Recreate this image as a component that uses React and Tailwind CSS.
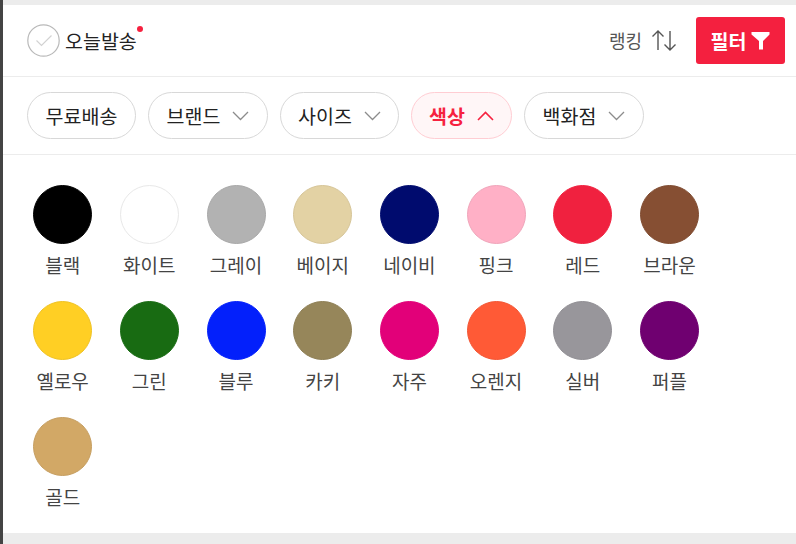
const colors = [
  ["블랙", "#000000", "#000000"],
  ["화이트", "#ffffff", "#e8e8e8"],
  ["그레이", "#b2b2b2", "#a8a8a8"],
  ["베이지", "#e3d2a4", "#d6c598"],
  ["네이비", "#000b6e", "#000b6e"],
  ["핑크", "#ffb0c6", "#efa5ba"],
  ["레드", "#f0213f", "#f0213f"],
  ["브라운", "#864f33", "#7f4b30"],
  ["옐로우", "#ffcf24", "#efc222"],
  ["그린", "#186b12", "#186b12"],
  ["블루", "#0320fb", "#0320fb"],
  ["카키", "#96865a", "#8e7f55"],
  ["자주", "#e20079", "#e20079"],
  ["오렌지", "#ff5a36", "#f25533"],
  ["실버", "#98969b", "#918f94"],
  ["퍼플", "#6f0070", "#6f0070"],
  ["골드", "#d2a866", "#c69e60"],
];

const font = { fontFamily: '"Noto Sans CJK KR", "Liberation Sans", sans-serif' };

function Chevron({ up, color }) {
  return (
    <svg width="17" height="10" viewBox="0 0 17 10" fill="none" stroke={color} strokeWidth={up ? 1.6 : 1.3}>
      <path d={up ? "M1 9 L8.5 1.5 L16 9" : "M1 1 L8.5 8.5 L16 1"} />
    </svg>
  );
}

function Chip({ label, chevron, width }) {
  return (
    <div className={`h-[47px] ${width} flex items-center justify-center gap-[12px] rounded-full border-[1.5px] border-[#d8d8d8] bg-white text-[19.5px] text-[#222222]`}>
      <span>{label}</span>
      {chevron && <Chevron color="#8c8c8c" />}
    </div>
  );
}

export default function App() {
  return (
    <div style={font} className="w-[796px] h-[544px] overflow-hidden bg-white border-l-[3px] border-[#444444] flex flex-col">
      <div className="h-[5px] bg-[#ececec]" />
      <div className="h-[72px] flex items-center justify-between border-b border-[#ececec] pl-[24px] pr-[11px]">
        <div className="flex items-center gap-[5px]">
          <svg width="33" height="33" viewBox="0 0 33 33" fill="none">
            <circle cx="16.5" cy="16.5" r="15.7" stroke="#b9b9b9" strokeWidth="1.2" />
            <path d="M9.5 16.5 L14.5 21.5 L24.5 11.5" stroke="#d2d2d2" strokeWidth="1.2" />
          </svg>
          <div className="relative text-[19.5px] text-[#222222]">
            오늘발송
            <span className="absolute right-[-6px] top-[0px] w-[6px] h-[6px] rounded-full bg-[#f6213f]" />
          </div>
        </div>
        <div className="flex items-center">
          <span className="text-[18px] text-[#555555]">랭킹</span>
          <svg className="ml-[9px]" width="26" height="24" viewBox="0 0 26 24" fill="none" stroke="#555555" strokeWidth="1.4">
            <path d="M7 21 V2 M1.5 7.5 L7 2 L12.5 7.5" />
            <path d="M19 2 V21 M13.5 15.5 L19 21 L24.5 15.5" />
          </svg>
          <div className="ml-[19px] w-[89px] h-[47px] rounded-[3px] bg-[#f4203f] flex items-center justify-center gap-[5px] text-white text-[19.5px] font-bold">
            <span>필터</span>
            <svg width="19" height="19" viewBox="0 0 19 19" fill="#ffffff">
              <path d="M0.5 1 H18.5 V3.5 L12 10 V18.5 H8 V10 L0.5 3.5 Z" />
            </svg>
          </div>
        </div>
      </div>
      <div className="h-[78px] flex items-center gap-[12px] border-b border-[#ececec] pl-[24px]">
        <Chip label="무료배송" width="w-[109px]" />
        <Chip label="브랜드" chevron width="w-[120px]" />
        <Chip label="사이즈" chevron width="w-[119px]" />
        <div className="h-[47px] w-[101px] flex items-center justify-center gap-[12px] rounded-full border-[1.5px] border-[#ffcdd3] bg-[#fff6f7] text-[19.5px] font-bold text-[#f6213f]">
          <span>색상</span>
          <Chevron up color="#f6213f" />
        </div>
        <Chip label="백화점" chevron width="w-[120px]" />
      </div>
      <div className="flex-1 grid grid-cols-[repeat(8,86.7px)] auto-rows-[116px] pl-[16.3px] pt-[30px]">
        {colors.map(([name, bg, line]) => (
          <div key={name} className="flex flex-col items-center">
            <div className="w-[59px] h-[59px] rounded-full border" style={{ backgroundColor: bg, borderColor: line }} />
            <span className="mt-[7px] text-[19px] leading-[27px] text-[#444444]">{name}</span>
          </div>
        ))}
      </div>
      <div className="h-[11px] bg-[#ececec]" />
    </div>
  );
}
